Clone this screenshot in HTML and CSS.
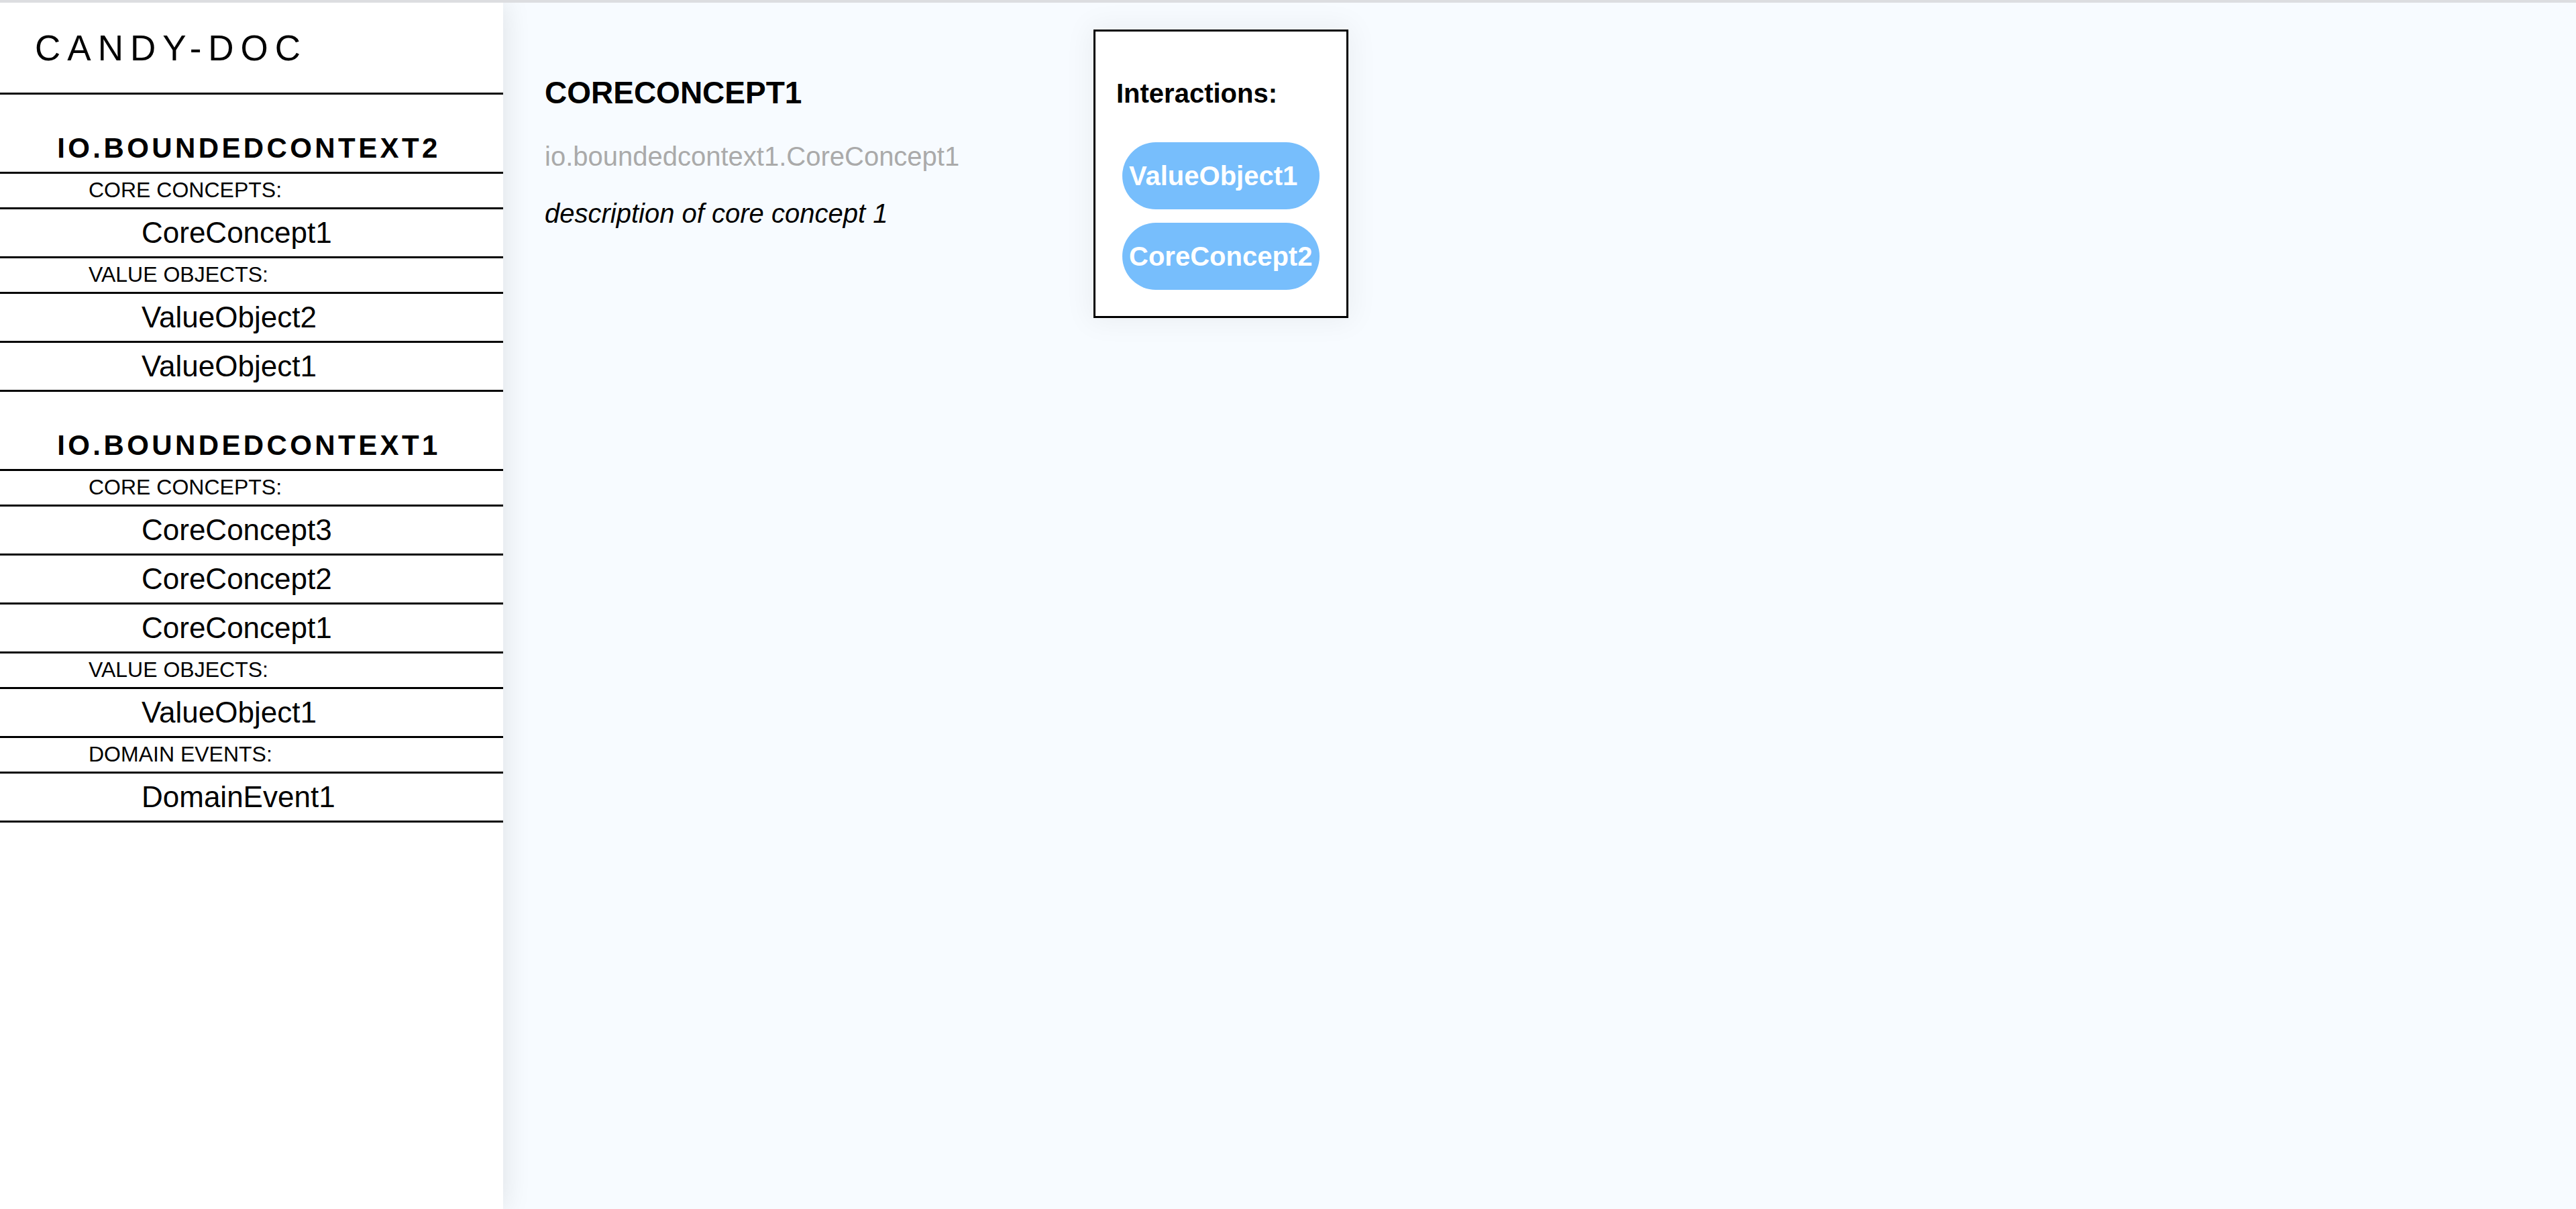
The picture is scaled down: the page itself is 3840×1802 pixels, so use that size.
FILE: index.html
```html
<!DOCTYPE html>
<html lang="en">
<head>
<meta charset="utf-8">
<title>candy-doc</title>
<link rel="stylesheet" href="styles.css">
</head>
<body>
<div class="app">
  <nav class="sidebar">
    <div class="brand"><span class="brand-text">CANDY-DOC</span></div>

    <section class="context">
      <h2 class="context-title">IO.BOUNDEDCONTEXT2</h2>
      <div class="category">CORE CONCEPTS:</div>
      <div class="item">CoreConcept1</div>
      <div class="category">VALUE OBJECTS:</div>
      <div class="item">ValueObject2</div>
      <div class="item">ValueObject1</div>
    </section>

    <section class="context">
      <h2 class="context-title">IO.BOUNDEDCONTEXT1</h2>
      <div class="category">CORE CONCEPTS:</div>
      <div class="item">CoreConcept3</div>
      <div class="item">CoreConcept2</div>
      <div class="item">CoreConcept1</div>
      <div class="category">VALUE OBJECTS:</div>
      <div class="item">ValueObject1</div>
      <div class="category">DOMAIN EVENTS:</div>
      <div class="item">DomainEvent1</div>
    </section>
  </nav>

  <main class="main">
    <article class="detail">
      <h1 class="detail-title">CORECONCEPT1</h1>
      <p class="detail-package">io.boundedcontext1.CoreConcept1</p>
      <p class="detail-desc">description of core concept 1</p>
    </article>

    <aside class="interactions">
      <h3 class="interactions-title">Interactions:</h3>
      <div class="pill-list">
        <span class="pill">ValueObject1</span>
        <span class="pill">CoreConcept2</span>
      </div>
    </aside>
  </main>
</div>
</body>
</html>
```

FILE: styles.css
```css
html, body {
  margin: 0;
  padding: 0;
}

body {
  font-family: "Liberation Sans", Arial, sans-serif;
  color: #000;
  background: #f7fbff;
  border-top: 4px solid #dcdde0;
}

.app {
  display: flex;
  align-items: stretch;
  min-height: calc(100vh - 4px);
}

/* ---------- Sidebar ---------- */
.sidebar {
  position: relative;
  z-index: 1;
  flex: 0 0 750px;
  width: 750px;
  background: #fff;
  box-shadow: 0 0 40px rgba(0, 0, 0, 0.11);
}

.brand {
  height: 134px;
  display: flex;
  align-items: center;
  padding-left: 52px;
  border-bottom: 3px solid #000;
}

.brand-text {
  font-size: 53px;
  letter-spacing: 10px;
  line-height: 61px;
}

.context-title {
  margin: 0;
  padding: 56px 8px 11px 0;
  font-size: 42px;
  line-height: 48px;
  font-weight: bold;
  letter-spacing: 4.4px;
  text-align: center;
  border-bottom: 3px solid #000;
}

.category {
  height: 48px;
  padding: 0 0 2px 132px;
  font-size: 32px;
  line-height: 48px;
  border-bottom: 3px solid #000;
}

.item {
  height: 70px;
  padding-left: 211px;
  font-size: 44px;
  line-height: 70px;
  border-bottom: 3px solid #000;
}

/* ---------- Main ---------- */
.main {
  flex: 1 1 auto;
  display: flex;
  align-items: flex-start;
  gap: 18px;
  padding: 40px 0 0 62px;
}

.detail {
  width: 800px;
  padding-top: 68px;
}

.detail-title {
  margin: 0;
  font-size: 46px;
  line-height: 53px;
  font-weight: bold;
}

.detail-package {
  margin: 45px 0 0;
  font-size: 40px;
  line-height: 46px;
  color: #aaaaaa;
}

.detail-desc {
  margin: 39px 0 0;
  font-size: 40px;
  line-height: 46px;
  font-style: italic;
}

.interactions {
  background: #fff;
  border: 3px solid #000;
  padding: 0 31px 39px;
  box-shadow: 0 0 40px 6px rgba(0, 0, 0, 0.05);
}

.interactions-title {
  margin: 69px 0 50px;
  font-size: 40px;
  line-height: 46px;
  font-weight: bold;
}

.pill-list {
  display: flex;
  flex-direction: column;
  gap: 20px;
  padding: 0 9px;
}

.pill {
  display: block;
  height: 100px;
  line-height: 100px;
  padding: 0 11px 0 10px;
  border-radius: 50px;
  background: #77befc;
  color: #fff;
  font-size: 40px;
  font-weight: bold;
  white-space: nowrap;
}
```
